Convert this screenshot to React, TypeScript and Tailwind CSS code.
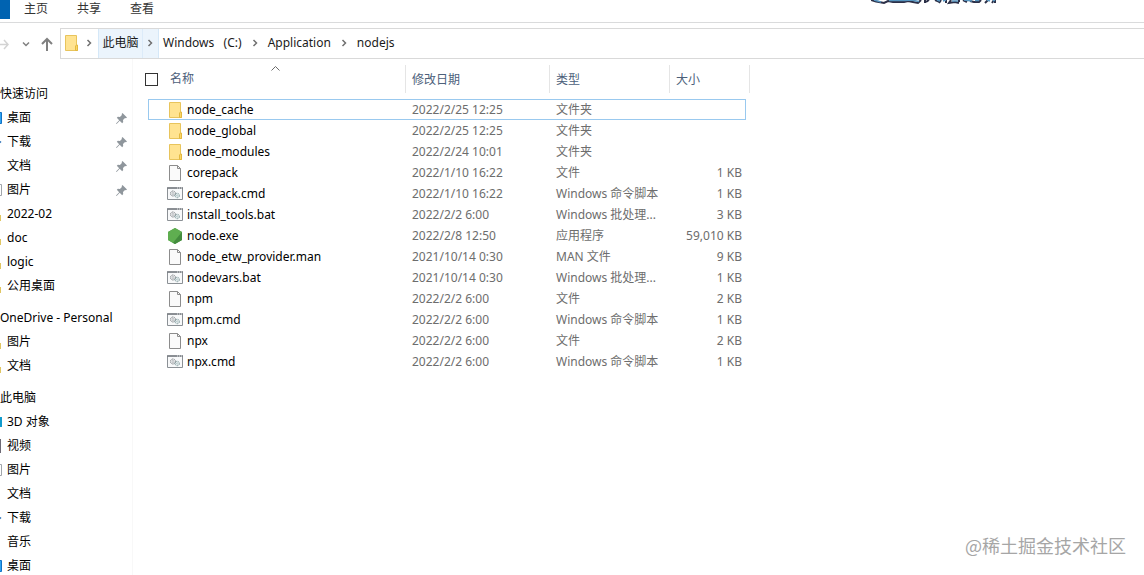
import React from 'react';

type FileKind = 'folder' | 'file' | 'script' | 'node';

const tabs = ['主页', '共享', '查看'];

const groups = [
  {
    title: '快速访问',
    items: [
      { name: '桌面', icon: 'desktop', pinned: true },
      { name: '下载', icon: 'download', pinned: true },
      { name: '文档', icon: 'none', pinned: true },
      { name: '图片', icon: 'picture', pinned: true },
      { name: '2022-02', icon: 'folder' },
      { name: 'doc', icon: 'folder' },
      { name: 'logic', icon: 'folder' },
      { name: '公用桌面', icon: 'folder' },
    ],
  },
  {
    title: 'OneDrive - Personal',
    items: [
      { name: '图片', icon: 'folder' },
      { name: '文档', icon: 'folder' },
    ],
  },
  {
    title: '此电脑',
    items: [
      { name: '3D 对象', icon: 'objects' },
      { name: '视频', icon: 'video' },
      { name: '图片', icon: 'picture' },
      { name: '文档', icon: 'none' },
      { name: '下载', icon: 'download' },
      { name: '音乐', icon: 'none' },
      { name: '桌面', icon: 'desktop' },
    ],
  },
];

const files: { name: string; kind: FileKind; date: string; type: string; size: string }[] = [
  { name: 'node_cache', kind: 'folder', date: '2022/2/25 12:25', type: '文件夹', size: '' },
  { name: 'node_global', kind: 'folder', date: '2022/2/25 12:25', type: '文件夹', size: '' },
  { name: 'node_modules', kind: 'folder', date: '2022/2/24 10:01', type: '文件夹', size: '' },
  { name: 'corepack', kind: 'file', date: '2022/1/10 16:22', type: '文件', size: '1 KB' },
  { name: 'corepack.cmd', kind: 'script', date: '2022/1/10 16:22', type: 'Windows 命令脚本', size: '1 KB' },
  { name: 'install_tools.bat', kind: 'script', date: '2022/2/2 6:00', type: 'Windows 批处理...', size: '3 KB' },
  { name: 'node.exe', kind: 'node', date: '2022/2/8 12:50', type: '应用程序', size: '59,010 KB' },
  { name: 'node_etw_provider.man', kind: 'file', date: '2021/10/14 0:30', type: 'MAN 文件', size: '9 KB' },
  { name: 'nodevars.bat', kind: 'script', date: '2021/10/14 0:30', type: 'Windows 批处理...', size: '1 KB' },
  { name: 'npm', kind: 'file', date: '2022/2/2 6:00', type: '文件', size: '2 KB' },
  { name: 'npm.cmd', kind: 'script', date: '2022/2/2 6:00', type: 'Windows 命令脚本', size: '1 KB' },
  { name: 'npx', kind: 'file', date: '2022/2/2 6:00', type: '文件', size: '2 KB' },
  { name: 'npx.cmd', kind: 'script', date: '2022/2/2 6:00', type: 'Windows 命令脚本', size: '1 KB' },
];

const FileIcon = ({ kind }: { kind: FileKind }) => (
  <svg className="h-4 w-4 shrink-0" viewBox="0 0 16 16" fill="none">
    {kind === 'folder' && (
      <>
        <path d="M2.500.5h11v10h1v5h-12z" fill="#ffe391" stroke="#e8c45c" />
        <path d="M12.500 15.500v-4.500l1-1h1v5.500z" fill="#fbd766" stroke="#e3b840" />
      </>
    )}
    {kind === 'file' && (
      <>
        <path d="M2.500.5h8l3 3v12h-11z" fill="#fafafa" stroke="#8c8c8c" />
        <path d="M10.500.5v3h3" stroke="#8c8c8c" />
      </>
    )}
    {kind === 'script' && (
      <>
        <path d="M.5 2h15v11.500H.5z" fill="#f8f9fa" stroke="#8b9095" />
        <path d="M0 2h16" stroke="#777c82" strokeWidth="1.500" />
        <path d="M10 2h1M12 2h1M14 2h1" stroke="#e4e6e8" />
        <circle cx="6" cy="7.500" r="2.500" stroke="#83878b" strokeDasharray="1.500 .5" />
        <circle cx="6" cy="7.500" r="1" stroke="#9a9ea2" strokeWidth=".7" />
        <circle cx="10.200" cy="9.500" r="2.200" stroke="#7d9a9c" strokeDasharray="1.500 .5" />
        <circle cx="10.200" cy="9.500" r=".8" stroke="#9ab3b5" strokeWidth=".7" />
      </>
    )}
    {kind === 'node' && (
      <>
        <path d="M8 0l7 4v8l-7 4-7-4V4z" fill="#4f9e45" />
        <path d="M8 0l7 4-9 11-5-3V4z" fill="#5fae50" />
        <path d="M15 4v8l-7 4-2-1z" fill="#448c3e" />
      </>
    )}
  </svg>
);

// only the right edge of each sidebar icon is in view
const EdgeIcon = ({ icon }: { icon: string }) => (
  <svg className="h-4 w-[7px] shrink-0" viewBox="0 0 7 16" fill="none">
    {icon === 'desktop' && <path d="M-4 2.500h5.500v11H-4z" fill="#2ea3f2" stroke="#1272c4" />}
    {icon === 'download' && <path d="M-2 10l3-2.500" stroke="#2f73b7" strokeWidth="1.500" />}
    {icon === 'picture' && <path d="M-4 2.500h5.500v11H-4z" fill="#fff" stroke="#a0a5aa" />}
    {icon === 'folder' && <path d="M-4 9h5v6h-5z" fill="#e0c663" />}
    {icon === 'objects' && <path d="M-4 3h6v10h-6z" fill="#129bcd" />}
    {icon === 'video' && <path d="M-4 1h5v14h-5z" fill="#6d6a75" />}
  </svg>
);

const PinIcon = () => (
  <svg className="h-[11px] w-[11px]" viewBox="0 0 11 11">
    <path d="M6.500 0L11 4.500l-1 .8-1-.2-2 2 .2 2-1 1.200L3.700 7.800.6 10.900 0 10.400l3.200-3.100L.8 4.800l1.100-1 2 .2 2-2-.2-1z" fill="#8f969c" />
  </svg>
);

const Chevron = () => (
  <svg className="h-2 w-2 shrink-0" viewBox="0 0 8 8" fill="none" stroke="#707070" strokeWidth="1.500">
    <path d="M2.500 1l3 3-3 3" />
  </svg>
);

const Ribbon = () => (
  <div className="flex h-[23px] items-start border-b border-[#dadbdc]">
    <div className="h-[19px] w-[10px] bg-[#0063b1]"></div>
    <div className="flex gap-[29px] pl-[14px] text-[#333333]">
      {tabs.map((tab) => (
        <button key={tab} className="h-[18px] leading-[18px]">
          {tab}
        </button>
      ))}
    </div>
    {/* lower edge of the floating lyrics */}
    <svg className="mr-[147px] ml-auto h-[6px] w-[126px]" viewBox="0 0 126 6" fill="none">
      <path
        d="M0 0l5 1.500 3 .5 5 1 4-2 5 1h11l4-1 5 1 5 1 3-3M54 0v3M58 0l-3 2M64 0l5 2M70 0l-2 3M75 0v3M80 0l-2 3 6-1 4 1M88 0v2M92 0l4 2M99 1l4 1h5l2-2M114 3l3-3M121 3l2-3M124 0v3"
        stroke="#2c3048"
        strokeWidth="2"
      />
      <path
        d="M3 0l7 2M18 .5h16l6-.5 8 1.500M66 0l3 1M72 1l3-1M81 1h6M93 0l8 1M104 .5h4M116 0l3 1M122 1l2-1"
        stroke="#5594bf"
        strokeWidth="1.500"
      />
    </svg>
  </div>
);

const AddressBar = () => (
  <div className="mt-[5px] flex h-[31px] items-center text-[#1a1a1a]">
    <div className="flex w-[60px] shrink-0 items-center">
      <button aria-label="前进" className="w-5">
        <svg className="h-[14px] w-[10px]" viewBox="0 0 10 14" fill="none" stroke="#d3d3d3" strokeWidth="1.500">
          <path d="M0 7.500h8M4 3l4 4.500L4 12" />
        </svg>
      </button>
      <button aria-label="最近浏览的位置" className="w-5 pl-[2px]">
        <svg className="h-2 w-2" viewBox="0 0 8 8" fill="none" stroke="#808080" strokeWidth="1.500">
          <path d="M1 2.500l3 3 3-3" />
        </svg>
      </button>
      <button aria-label="上移" className="w-5">
        <svg className="h-[14px] w-[14px]" viewBox="0 0 14 14" fill="none" stroke="#808080" strokeWidth="2">
          <path d="M7 14V2M2 7l5-5 5 5" />
        </svg>
      </button>
    </div>
    <nav className="flex h-full flex-1 items-stretch border-y border-l border-[#d9d9d9] whitespace-pre">
      <span className="flex w-[37px] items-center gap-[6px] pb-[2px] pl-[2px]">
        <FileIcon kind="folder" />
        <Chevron />
      </span>
      <span className="flex w-[61px] items-stretch border-x border-[#d5e8f8] bg-[#ebf4fc]">
        <button className="w-[44px] border-r border-[#dcebf9] pb-[2px] text-center">此电脑</button>
        <span className="flex items-center pb-[2px] pl-[3px]">
          <Chevron />
        </span>
      </span>
      <span className="flex items-center gap-[9px] pb-[2px] pl-1">
        <button>{'Windows   (C:)'}</button>
        <Chevron />
        <button>Application</button>
        <Chevron />
        <button>nodejs</button>
      </span>
    </nav>
  </div>
);

const Sidebar = () => (
  <aside className="flex w-[133px] shrink-0 flex-col gap-2 border-r border-[#f8f8f8] pt-[23px] text-black">
    {groups.map((group) => (
      <div key={group.title}>
        <h2 className="h-6 leading-6 whitespace-nowrap">{group.title}</h2>
        <ul>
          {group.items.map((item) => (
            <li key={item.name} className="flex h-6 items-center pr-[5px]">
              <EdgeIcon icon={item.icon} />
              <span className="flex-1">{item.name}</span>
              {'pinned' in item && <PinIcon />}
            </li>
          ))}
        </ul>
      </div>
    ))}
  </aside>
);

const FileTable = () => (
  <table className="ml-3 w-[605px] table-fixed border-separate border-spacing-0">
    <colgroup>
      <col className="w-[260px]" />
      <col className="w-[144px]" />
      <col className="w-[120px]" />
      <col className="w-[81px]" />
    </colgroup>
    <thead className="text-left text-[#4c607a]">
      <tr className="h-10">
        <th className="relative p-0 font-normal">
          <label className="flex items-center gap-3 leading-[18px]">
            <input type="checkbox" className="h-[13px] w-[13px] appearance-none border border-[#333333] bg-white" />
            名称
          </label>
          <svg className="absolute top-[7px] left-[126px] h-[5px] w-[9px]" viewBox="0 0 9 5" fill="none" stroke="#6b6b6b">
            <path d="M.5 4.500l4-4 4 4" />
          </svg>
        </th>
        <th className="p-0 font-normal">
          <div className="h-7 border-l border-[#e5e5e5] pl-[6px] leading-[30px]">修改日期</div>
        </th>
        <th className="p-0 font-normal">
          <div className="h-7 border-l border-[#e5e5e5] pl-[6px] leading-[30px]">类型</div>
        </th>
        <th className="p-0 font-normal">
          <div className="h-7 border-x border-[#e5e5e5] pl-[6px] leading-[30px]">大小</div>
        </th>
      </tr>
    </thead>
    <tbody className="text-[#6d6d6d]">
      {files.map((file, i) => {
        const border = i === 0 ? 'border-[#99c9ef]' : 'border-transparent';
        return (
          <tr key={file.name}>
            <td className="p-0 pl-[3px]">
              <div className={`flex h-[21px] items-center gap-1 border-y border-l pl-[18px] text-black ${border}`}>
                <FileIcon kind={file.kind} />
                {file.name}
              </div>
            </td>
            <td className="p-0">
              <div className={`h-[21px] border-y pl-[7px] leading-5 ${border}`}>{file.date}</div>
            </td>
            <td className="p-0">
              <div className={`h-[21px] border-y pl-[7px] leading-5 whitespace-nowrap ${border}`}>{file.type}</div>
            </td>
            <td className="p-0 pr-1">
              <div className={`h-[21px] border-y border-r pr-[3px] text-right leading-5 ${border}`}>{file.size}</div>
            </td>
          </tr>
        );
      })}
    </tbody>
  </table>
);

const App = () => {
  return (
    <div className="relative flex h-screen flex-col overflow-hidden bg-white font-['Noto_Sans','Noto_Sans_CJK_SC',sans-serif] text-[12px] leading-4">
      <Ribbon />
      <AddressBar />
      <div className="flex min-h-0 flex-1 items-start">
        <Sidebar />
        <main className="flex-1">
          <FileTable />
        </main>
      </div>
      <div className="absolute right-[18px] bottom-[18px] font-['Noto_Sans_CJK_SC',sans-serif] text-[18px] leading-6 text-[#a6a6a6]">
        @稀土掘金技术社区
      </div>
    </div>
  );
};

export default App;
